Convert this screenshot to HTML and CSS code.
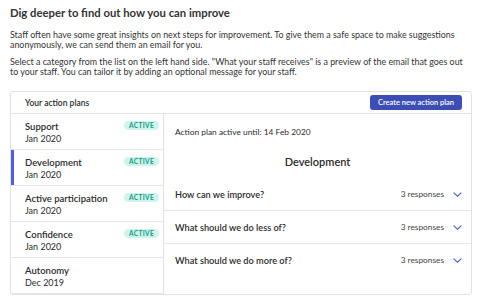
FILE: index.html
```html
<!DOCTYPE html>
<html lang="en">
<head>
    <meta charset="UTF-8">
    <meta name="viewport" content="width=device-width, initial-scale=1.0">
    <title>Action plans</title>
    <link rel="stylesheet" href="styles.css">
</head>
<body>
    <h1 class="page-title">Dig deeper to find out how you can improve</h1>
    <p class="intro">Staff often have some great insights on next steps for improvement. To give them a safe space to make suggestions anonymously, we can send them an email for you.</p>
    <p class="intro">Select a category from the list on the left hand side. "What your staff receives" is a preview of the email that goes out to your staff. You can tailor it by adding an optional message for your staff.</p>

    <div class="plans-card">
        <div class="plans-header">
            <span class="plans-heading">Your action plans</span>
            <button class="create-button">Create new action plan</button>
        </div>
        <div class="plans-body">
            <ul class="plan-list">
                <li class="plan-item">
                    <div class="plan-text">
                        <div class="plan-name">Support</div>
                        <div class="plan-date">Jan 2020</div>
                    </div>
                    <span class="badge">ACTIVE</span>
                </li>
                <li class="plan-item selected">
                    <div class="plan-text">
                        <div class="plan-name">Development</div>
                        <div class="plan-date">Jan 2020</div>
                    </div>
                    <span class="badge">ACTIVE</span>
                </li>
                <li class="plan-item">
                    <div class="plan-text">
                        <div class="plan-name">Active participation</div>
                        <div class="plan-date">Jan 2020</div>
                    </div>
                    <span class="badge">ACTIVE</span>
                </li>
                <li class="plan-item">
                    <div class="plan-text">
                        <div class="plan-name">Confidence</div>
                        <div class="plan-date">Jan 2020</div>
                    </div>
                    <span class="badge">ACTIVE</span>
                </li>
                <li class="plan-item">
                    <div class="plan-text">
                        <div class="plan-name">Autonomy</div>
                        <div class="plan-date">Dec 2019</div>
                    </div>
                </li>
            </ul>

            <div class="plan-detail">
                <div class="active-until">Action plan active until: 14 Feb 2020</div>
                <h2 class="detail-title">Development</h2>
                <div class="question">
                    <span class="question-text">How can we improve?</span>
                    <span class="responses">3 responses</span>
                    <svg class="chevron" width="9" height="5" viewBox="0 0 9 5"><path d="M0.6 0.6 L4.5 4.2 L8.4 0.6" fill="none" stroke="#4a5fe0" stroke-width="1.2"/></svg>
                </div>
                <div class="question">
                    <span class="question-text">What should we do less of?</span>
                    <span class="responses">3 responses</span>
                    <svg class="chevron" width="9" height="5" viewBox="0 0 9 5"><path d="M0.6 0.6 L4.5 4.2 L8.4 0.6" fill="none" stroke="#4a5fe0" stroke-width="1.2"/></svg>
                </div>
                <div class="question last">
                    <span class="question-text">What should we do more of?</span>
                    <span class="responses">3 responses</span>
                    <svg class="chevron" width="9" height="5" viewBox="0 0 9 5"><path d="M0.6 0.6 L4.5 4.2 L8.4 0.6" fill="none" stroke="#4a5fe0" stroke-width="1.2"/></svg>
                </div>
            </div>
        </div>
    </div>
</body>
</html>
```

FILE: styles.css
```css
body {
    font-family: Lato, "Open Sans", sans-serif;
    margin: 0;
    padding: 5px 8px 0 10px;
    color: #2b2b2b;
    background-color: #ffffff;
}

.page-title {
    font-size: 11.3px;
    font-weight: 700;
    margin: 0 0 9px 0;
    line-height: 16px;
    color: #333;
}

.intro {
    font-size: 8.9px;
    line-height: 10px;
    margin: 0 0 7px 0;
    color: #333;
}

.plans-card {
    margin-top: 14px;
    border: 1px solid #e2e2e2;
    border-radius: 3px;
    width: 462px;
    box-sizing: border-box;
}

.plans-header {
    display: flex;
    align-items: center;
    justify-content: space-between;
    height: 21px;
    padding: 0 9px 0 14px;
    border-bottom: 1px solid #e2e2e2;
}

.plans-heading {
    font-size: 8.5px;
    font-weight: 600;
}

.create-button {
    background-color: #3c4eb4;
    color: white;
    border: none;
    border-radius: 3px;
    font-family: inherit;
    font-size: 7.5px;
    font-weight: 600;
    width: 92px;
    height: 15px;
    padding: 0;
}

.plans-body {
    display: flex;
}

.plan-list {
    list-style: none;
    margin: 0;
    padding: 0;
    width: 152px;
    border-right: 1px solid #e2e2e2;
}

.plan-item {
    display: flex;
    justify-content: space-between;
    align-items: flex-start;
    height: 36px;
    box-sizing: border-box;
    padding: 6px 4px 0 14px;
    border-bottom: 1px solid #e6e6e6;
}

.plan-item.selected {
    box-shadow: inset 3px 0 0 #4f5fe0;
}

.plan-name {
    font-size: 9.5px;
    font-weight: 600;
    line-height: 13px;
}

.plan-date {
    font-size: 9px;
    line-height: 12px;
}

.badge {
    background-color: #cdf4ec;
    color: #179b86;
    font-size: 6.6px;
    font-weight: 700;
    border-radius: 5px;
    padding: 0 5px;
    line-height: 9px;
    margin-top: 1px;
    letter-spacing: 0.3px;
}

.plan-detail {
    flex: 1;
    padding-top: 13px;
}

.active-until {
    font-size: 8.4px;
    padding-left: 11px;
    line-height: 10px;
}

.detail-title {
    font-size: 11px;
    font-weight: 600;
    text-align: center;
    margin: 18px 0 9px 0;
    line-height: 14px;
}

.question {
    display: flex;
    align-items: center;
    height: 32px;
    padding: 0 9px 0 11px;
    border-bottom: 1px solid #e6e6e6;
}

.question.last {
    border-bottom: none;
}

.question-text {
    flex: 1;
    font-size: 9.2px;
    font-weight: 600;
}

.responses {
    font-size: 8.3px;
    color: #444;
    margin-right: 9px;
}
```
